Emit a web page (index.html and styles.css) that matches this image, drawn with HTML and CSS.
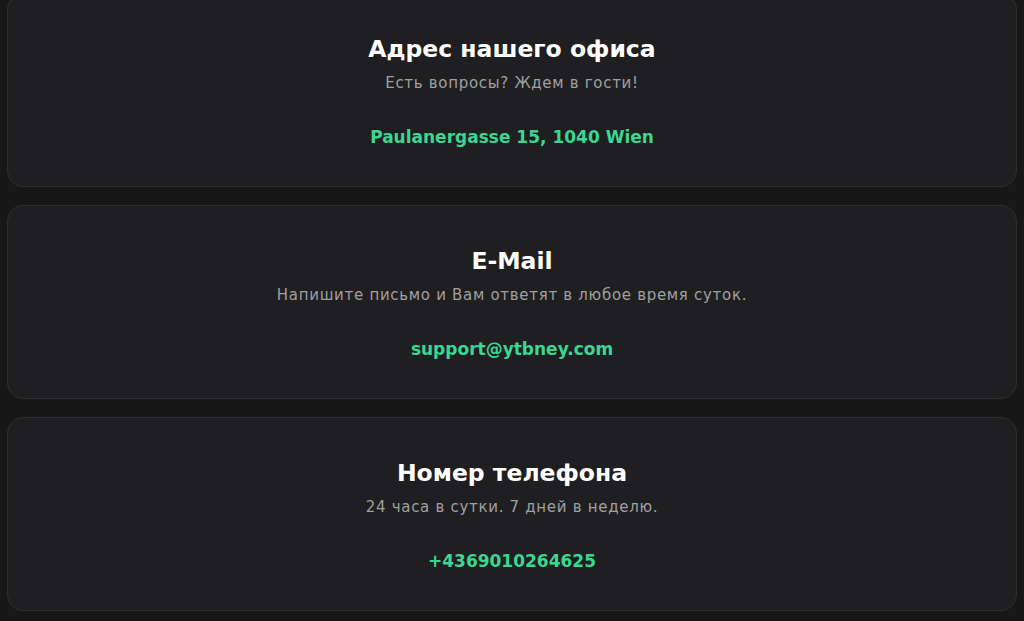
FILE: index.html
```html
<!DOCTYPE html>
<html lang="ru">
<head>
<meta charset="utf-8">
<link rel="stylesheet" href="styles.css">
</head>
<body>
<main class="list">
  <section class="card">
    <h2 class="title">Адрес нашего офиса</h2>
    <p class="sub">Есть вопросы? Ждем в гости!</p>
    <p class="accent">Paulanergasse 15, 1040 Wien</p>
  </section>
  <section class="card">
    <h2 class="title">E-Mail</h2>
    <p class="sub">Напишите письмо и Вам ответят в любое время суток.</p>
    <p class="accent">support@ytbney.com</p>
  </section>
  <section class="card">
    <h2 class="title">Номер телефона</h2>
    <p class="sub">24 часа в сутки. 7 дней в неделю.</p>
    <p class="accent">+4369010264625</p>
  </section>
</main>
</body>
</html>
```
FILE: styles.css
```css
html, body {
  margin: 0;
  padding: 0;
  background: #171717;
  height: 100%;
  overflow: hidden;
}
body {
  font-family: "DejaVu Sans", "Noto Sans", sans-serif;
}
.list {
  display: flex;
  flex-direction: column;
  gap: 18px;
  padding: 0 7px;
  margin-top: -7px;
}
.card {
  height: 194px;
  box-sizing: border-box;
  background: #1f1f21;
  border: 1px solid #2d2d2f;
  border-radius: 16px;
  padding: 40px 20px;
  text-align: center;
}
.title {
  margin: 0;
  font-size: 23.5px;
  line-height: 30px;
  font-weight: 700;
  color: #ffffff;
}
.sub {
  margin: 9px 0 0;
  font-size: 15px;
  line-height: 20px;
  letter-spacing: 0.7px;
  color: #a0a0a0;
}
.accent {
  margin: 33px 0 0;
  font-size: 17px;
  line-height: 22px;
  font-weight: 700;
  color: #3bd692;
}
```
